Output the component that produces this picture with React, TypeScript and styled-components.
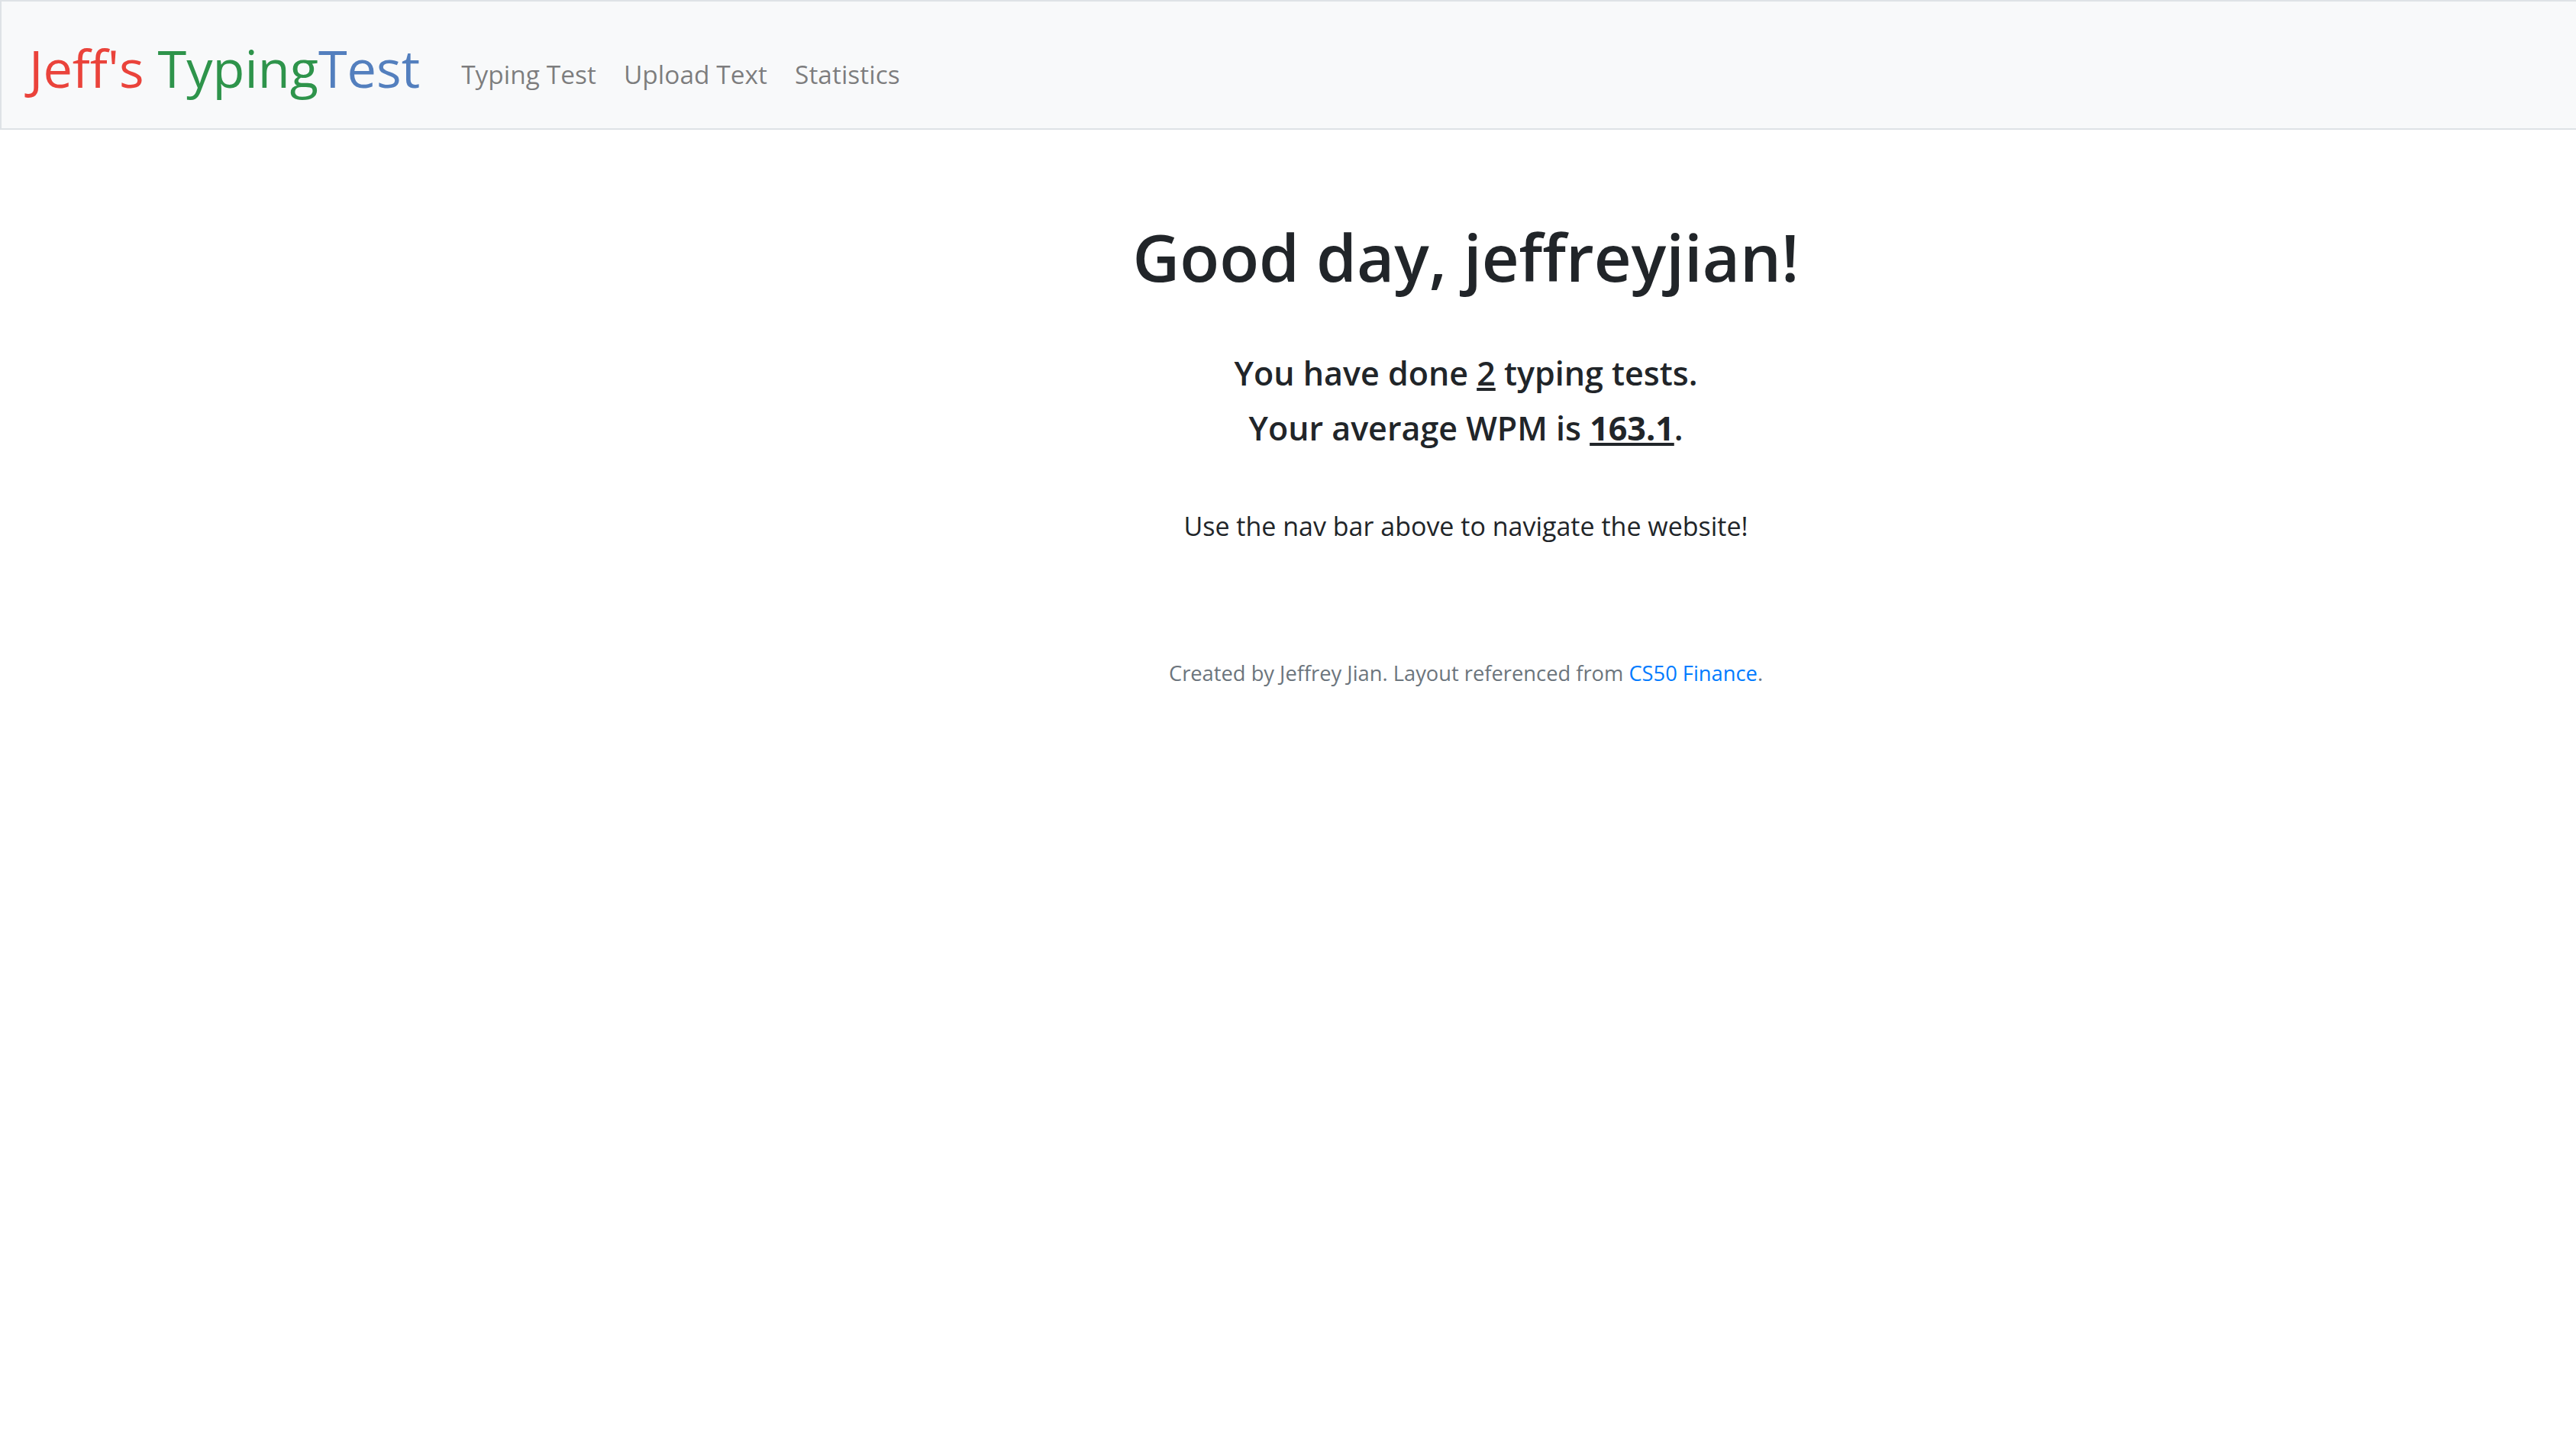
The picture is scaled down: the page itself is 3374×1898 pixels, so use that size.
import { createGlobalStyle } from "styled-components"
import styled from "styled-components"

// page was captured at a 3840px wide viewport (content centred on 1920) and cropped
const GlobalStyle = createGlobalStyle`
    html, body {
        margin: 0;
        padding: 0;
        overflow: hidden;
        background: #fff;
    }
    body {
        font-family: "Open Sans", "Noto Sans", sans-serif;
        font-size: 34px;
        line-height: 54px;
        color: #212529;
    }
`

export default function App() {
    return (
        <Page>
            <GlobalStyle />
            <Navbar>
                <Brand href="#">
                    <BrandPart color="#ea433b">Jeff's </BrandPart>
                    <BrandPart color="#2e944b">Typing</BrandPart>
                    <BrandPart color="#537fbe">Test</BrandPart>
                </Brand>
                <NavList>
                    <NavLink href="#">Typing Test</NavLink>
                    <NavLink href="#">Upload Text</NavLink>
                    <NavLink href="#">Statistics</NavLink>
                </NavList>
            </Navbar>
            <Main>
                <Greeting>Good day, jeffreyjian!</Greeting>
                <Stats>
                    <StatLine>
                        You have done <u>2</u> typing tests.
                    </StatLine>
                    <StatLine>
                        Your average WPM is{" "}
                        <u>
                            <strong>163.1</strong>
                        </u>
                        .
                    </StatLine>
                </Stats>
                <Note>Use the nav bar above to navigate the website!</Note>
            </Main>
            <Footer>
                Created by Jeffrey Jian. Layout referenced from{" "}
                <FooterLink href="#">CS50 Finance</FooterLink>.
            </Footer>
        </Page>
    )
}

const Page = styled.div`
    width: 3840px;
`

const Navbar = styled.nav`
    display: flex;
    align-items: center;
    padding: 18px 36px;
    background: #f8f9fa;
    border: 2px solid #dee2e6;
`

const Brand = styled.a`
    display: inline-block;
    padding: 15px 0 7px;
    margin-right: 36px;
    font-size: 68.5px;
    line-height: 108px;
    text-decoration: none;
    white-space: nowrap;
`

const BrandPart = styled.span<{ color: string }>`
    color: ${({ color }) => color};
    white-space: pre;
`

const NavList = styled.div`
    display: flex;
    align-items: center;
`

const NavLink = styled.a`
    display: block;
    padding: 30px 18px 6px;
    font-size: 33.5px;
    line-height: 54px;
    color: rgba(0, 0, 0, 0.5);
    text-decoration: none;
`

const Main = styled.main`
    width: 2565px;
    box-sizing: border-box;
    margin: 0 auto;
    padding: 112px 108px 108px;
    text-align: center;
`

const Greeting = styled.h1`
    margin: 0 0 18px;
    font-size: 85px;
    line-height: 108px;
    font-weight: 600;
`

const Stats = styled.div`
    margin-top: 72px;
`

const StatLine = styled.h5`
    margin: 0 0 18px;
    font-size: 43px;
    line-height: 54px;
    font-weight: 600;

    strong {
        font-weight: 700;
    }
`

const Note = styled.p`
    margin: 74px 0 36px;
`

const Footer = styled.footer`
    font-size: 27.3px;
    line-height: 43px;
    color: #6c757d;
    text-align: center;
`

const FooterLink = styled.a`
    color: #007bff;
    text-decoration: none;
`
